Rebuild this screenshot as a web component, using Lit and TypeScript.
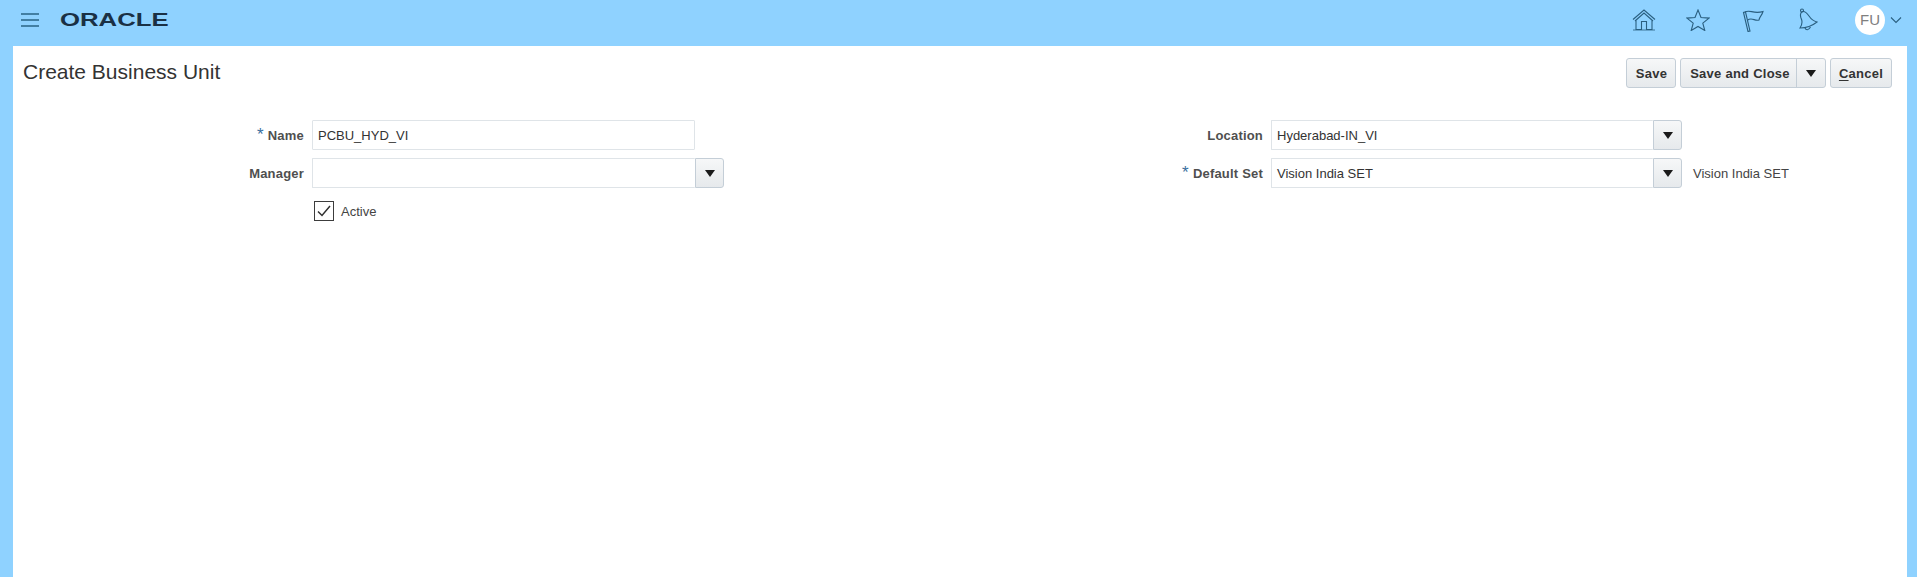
import { LitElement, html, css } from "lit";
import { customElement } from "lit/decorators.js";

@customElement("app-root")
export class AppRoot extends LitElement {
  static styles = css`
    :host {
      display: flex;
      flex-direction: column;
      height: 577px;
      overflow: hidden;
      background: #8fd2ff;
      font-family: "Liberation Sans", Arial, sans-serif;
      color: #333;
    }
    .header {
      height: 46px;
      flex: none;
      display: flex;
      align-items: center;
      box-sizing: border-box;
      padding: 0 15px 7px 21px;
    }
    .burger { width: 18px; height: 14px; display: block; }
    .logo {
      margin-left: 21px;
      width: 108px;
      height: 18px;
      font-size: 18px;
      line-height: 18px;
      font-weight: 700;
      color: #1a3044;
      transform: scaleX(1.43);
      transform-origin: left center;
      white-space: nowrap;
    }
    .icons { margin-left: auto; display: flex; align-items: center; }
    .icons svg { display: block; fill: none; stroke: #2a5f80; stroke-width: 1.1; }
    .ic1 { width: 24px; height: 22px; margin-right: 30px; }
    .ic2 { width: 24px; height: 22px; margin-right: 32px; }
    .ic3 { width: 22px; height: 24px; margin-right: 34px; }
    .ic4 { width: 20px; height: 24px; margin-right: 37px; }
    .avatar {
      width: 30px;
      height: 30px;
      border-radius: 50%;
      background: #fff;
      color: #7f7f7f;
      font-size: 15px;
      display: flex;
      align-items: center;
      justify-content: center;
      margin-right: 5px;
    }
    .icons .chev { width: 12px; height: 8px; }
    .panel {
      flex: 1;
      margin: 0 10px 0 13px;
      background: #fff;
    }
    .titlebar {
      display: flex;
      align-items: flex-start;
      justify-content: space-between;
      padding: 12px 15px 0 10px;
    }
    h1 {
      margin: 0;
      font-size: 21px;
      line-height: 28px;
      font-weight: 400;
      color: #333;
    }
    .actions { display: flex; gap: 4px; }
    .btn {
      height: 30px;
      box-sizing: border-box;
      display: flex;
      align-items: center;
      border: 1px solid #c4ced7;
      border-radius: 3px;
      background: linear-gradient(#f6f7f8, #e6e9ec);
      font-size: 13px;
      font-weight: 700;
      color: #333;
      letter-spacing: 0.25px;
    }
    .btn.save { width: 50px; justify-content: center; padding-left: 1px; }
    .btn.close { width: 146px; }
    .btn.close .lbl { flex: 1; text-align: center; padding-left: 3px; }
    .btn.close .drop {
      width: 29px;
      height: 100%;
      box-sizing: border-box;
      border-left: 1px solid #c4ced7;
      display: flex;
      align-items: center;
      justify-content: center;
    }
    .btn.cancel { width: 62px; justify-content: center; }
    .btn u { text-underline-offset: 2px; }
    .tri { width: 0; height: 0; border-left: 5px solid transparent; border-right: 5px solid transparent; border-top: 7px solid #1a1a1a; }
    .form {
      display: grid;
      grid-template-columns: 299px 411px 548px 411px auto;
      grid-auto-rows: 30px;
      row-gap: 8px;
      margin-top: 32px;
    }
    .label {
      display: flex;
      align-items: center;
      justify-content: flex-end;
      padding-right: 8px;
      font-size: 13px;
      font-weight: 700;
      color: #4f4f4f;
      letter-spacing: 0.2px;
    }
    .req { color: #3a6f9e; font-size: 17px; font-weight: 400; margin-right: 4px; line-height: 14px; }
    .input {
      box-sizing: border-box;
      border: 1px solid #dfe4e8;
      border-radius: 1px;
      height: 30px;
      display: flex;
      align-items: center;
      padding-left: 5px;
      font-size: 13px;
      color: #333;
      background: #fff;
    }
    .name { width: 383px; }
    .combo { display: flex; width: 411px; }
    .combo.wide { width: 412px; }
    .combo .input { flex: 1; border-right: none; }
    .combo .arrow {
      width: 29px;
      height: 30px;
      box-sizing: border-box;
      border: 1px solid #c4ced7;
      border-radius: 0 3px 3px 0;
      background: linear-gradient(#f6f7f8, #e6e9ec);
      display: flex;
      align-items: center;
      justify-content: center;
    }
    .note { display: flex; align-items: center; padding-left: 11px; font-size: 13px; color: #444; white-space: nowrap; }
    .active { grid-column: 2; display: flex; align-items: center; padding-left: 2px; gap: 7px; font-size: 13px; color: #444; }
    .check { width: 20px; height: 20px; box-sizing: border-box; display: block; }
  `;

  render() {
    return html`
      <header class="header">
        <svg class="burger" viewBox="0 0 18 14" aria-hidden="true">
          <path d="M0 1h18M0 7h18M0 13h18" stroke="#2a6485" stroke-width="1.6" />
        </svg>
        <div class="logo">ORACLE</div>
        <div class="icons">
          <svg class="ic1" viewBox="0 0 24 22">
            <path d="M1 10.500 12 1l11 9.500M3 12 12 4l9 8" />
            <path d="M4 11.500V20.500h5.500v-8h5v8H20V11.500" />
            <path d="M1 21h22" stroke-width="0.800" />
          </svg>
          <svg class="ic2" viewBox="0 0 24 22">
            <path d="M12 1l3 7.500 8 .6-6.200 5 2 7.400L12 17.500 5.200 21.500l2-7.400L1 9.100l8-.6z" />
          </svg>
          <svg class="ic3" viewBox="0 0 22 24">
            <path d="M1.500 4.500 6 23.500 8 23 3.500 4z" />
            <path d="M3 4C8 1 11 6.500 21 3.500c-1 4-3.500 5-4 8.500-4 1.500-7-3-11.300 0" />
          </svg>
          <svg class="ic4" viewBox="0 0 20 24">
            <path d="M4.500 3.500C7 3 9 5 11 8c2 3 4 5 8 6-5 4-11 6-17 6 2-3 3-6 1-10-1-3-.5-5.500 1.500-6.500z" />
            <circle cx="4" cy="2.500" r="1.500" />
            <path d="M7 20c1 2.500 3.500 2.500 5.500-1" />
          </svg>
          <div class="avatar">FU</div>
          <svg class="chev" viewBox="0 0 12 8"><path d="M1 1.500 6 6.500l5-5" /></svg>
        </div>
      </header>
      <main class="panel">
        <div class="titlebar">
          <h1>Create Business Unit</h1>
          <div class="actions">
            <div class="btn save">Save</div>
            <div class="btn close">
              <span class="lbl">Save and Close</span>
              <span class="drop"><i class="tri"></i></span>
            </div>
            <div class="btn cancel"><u>C</u>ancel</div>
          </div>
        </div>
        <div class="form">
          <div class="label"><span class="req">*</span>Name</div>
          <div class="input name">PCBU_HYD_VI</div>
          <div class="label">Location</div>
          <div class="combo">
            <div class="input">Hyderabad-IN_VI</div>
            <div class="arrow"><i class="tri"></i></div>
          </div>
          <div></div>

          <div class="label">Manager</div>
          <div class="combo wide">
            <div class="input"></div>
            <div class="arrow"><i class="tri"></i></div>
          </div>
          <div class="label"><span class="req">*</span>Default Set</div>
          <div class="combo">
            <div class="input">Vision India SET</div>
            <div class="arrow"><i class="tri"></i></div>
          </div>
          <div class="note">Vision India SET</div>

          <div class="active">
            <svg class="check" viewBox="0 0 20 20">
              <rect x="0.500" y="0.500" width="19" height="19" fill="#fff" stroke="#3c3c3c" />
              <path d="M4 10.500 8 14.500 16 5" fill="none" stroke="#2f2f2f" stroke-width="1.500" />
            </svg>
            Active
          </div>
        </div>
      </main>
    `;
  }
}
